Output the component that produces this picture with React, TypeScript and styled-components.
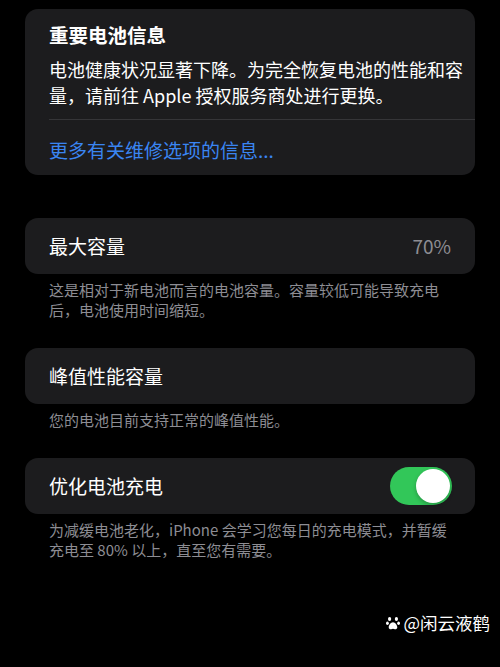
import React, { useState } from "react";
import styled, { createGlobalStyle } from "styled-components";

const palette = {
  bg: "#000000",
  card: "#1c1c1e",
  text: "#ffffff",
  secondary: "#8d8d93",
  divider: "#353538",
  blue: "#3a85f2",
  green: "#32c759",
};

const GlobalStyle = createGlobalStyle`
  html, body {
    margin: 0;
    padding: 0;
    background: ${palette.bg};
  }
  body {
    font-family: "Noto Sans CJK SC", "Noto Sans", sans-serif;
    color: ${palette.text};
    -webkit-font-smoothing: antialiased;
  }
`;

const Page = styled.div`
  position: relative;
  width: 500px;
  height: 667px;
  overflow: hidden;
  box-sizing: border-box;
  padding: 9px 25px 0;
  display: flex;
  flex-direction: column;
`;

const Card = styled.div`
  background: ${palette.card};
  border-radius: 13px;
  overflow: hidden;
`;

const InfoCard = styled(Card)`
  padding: 13px 0 12px 24px;
  margin-bottom: 43px;
`;

const InfoTitle = styled.p`
  margin: 0;
  font-size: 19.5px;
  font-weight: 700;
  line-height: 26px;
`;

const InfoBody = styled.p`
  margin: 8px 12px 0 0;
  font-size: 18px;
  line-height: 26px;
`;

const Divider = styled.div`
  height: 1px;
  background: ${palette.divider};
  margin: 11px 0 17px;
`;

const Link = styled.a`
  display: block;
  font-size: 19px;
  line-height: 26px;
  color: ${palette.blue};
  text-decoration: none;
  cursor: pointer;
`;

const Row = styled(Card)`
  height: 56px;
  box-sizing: border-box;
  padding: 0 23px 2px 24px;
  display: flex;
  align-items: center;
  justify-content: space-between;
`;

const RowLabel = styled.span`
  font-size: 19px;
`;

const RowValue = styled.span`
  font-size: 19px;
  color: ${palette.secondary};
  padding-right: 1px;
`;

const Caption = styled.p<{ $gap: number }>`
  margin: 6px 0 ${(p) => p.$gap}px;
  padding: 0 26px 0 24px;
  font-size: 15px;
  line-height: 20px;
  color: ${palette.secondary};
`;

const Track = styled.button<{ $on: boolean }>`
  width: 62px;
  height: 38px;
  margin-top: 2px;
  border: none;
  padding: 2px;
  border-radius: 19px;
  background: ${(p) => (p.$on ? palette.green : "#39393d")};
  display: flex;
  justify-content: ${(p) => (p.$on ? "flex-end" : "flex-start")};
  cursor: pointer;
`;

const Knob = styled.span`
  width: 34px;
  height: 34px;
  border-radius: 50%;
  background: #ffffff;
  box-shadow: 0 2px 4px rgba(0, 0, 0, 0.25);
`;

const Watermark = styled.div`
  position: absolute;
  right: 10px;
  bottom: 32px;
  display: flex;
  align-items: center;
  gap: 3px;
  font-size: 17.5px;
  color: #ffffff;
`;

const Paw = () => (
  <svg width="14" height="14" viewBox="0 0 14 14" fill="#ffffff">
    <ellipse cx="3.6" cy="3" rx="1.6" ry="2" />
    <ellipse cx="10.4" cy="3" rx="1.6" ry="2" />
    <ellipse cx="1.4" cy="7.2" rx="1.4" ry="1.7" />
    <ellipse cx="12.6" cy="7.2" rx="1.4" ry="1.7" />
    <path d="M7 6.2c2.2 0 4.3 3 4.3 5 0 1.6-1.4 2.2-2.4 2-.8-.2-1.3-.5-1.9-.5s-1.1.3-1.9.5c-1 .2-2.4-.4-2.4-2 0-2 2.1-5 4.3-5z" />
  </svg>
);

const App: React.FC = () => {
  const [optimized, setOptimized] = useState(true);

  return (
    <>
      <GlobalStyle />
      <Page>
        <InfoCard>
          <InfoTitle>重要电池信息</InfoTitle>
          <InfoBody>
            电池健康状况显著下降。为完全恢复电池的性能和容量，请前往 Apple 授权服务商处进行更换。
          </InfoBody>
          <Divider />
          <Link>更多有关维修选项的信息...</Link>
        </InfoCard>

        <Row>
          <RowLabel>最大容量</RowLabel>
          <RowValue>70%</RowValue>
        </Row>
        <Caption $gap={28}>
          这是相对于新电池而言的电池容量。容量较低可能导致充电后，电池使用时间缩短。
        </Caption>

        <Row>
          <RowLabel>峰值性能容量</RowLabel>
        </Row>
        <Caption $gap={28}>您的电池目前支持正常的峰值性能。</Caption>

        <Row>
          <RowLabel>优化电池充电</RowLabel>
          <Track $on={optimized} onClick={() => setOptimized(!optimized)}>
            <Knob />
          </Track>
        </Row>
        <Caption $gap={0}>
          为减缓电池老化，iPhone 会学习您每日的充电模式，并暂缓充电至 80% 以上，直至您有需要。
        </Caption>

        <Watermark>
          <Paw />
          <span>@闲云液鹤</span>
        </Watermark>
      </Page>
    </>
  );
};

export default App;
